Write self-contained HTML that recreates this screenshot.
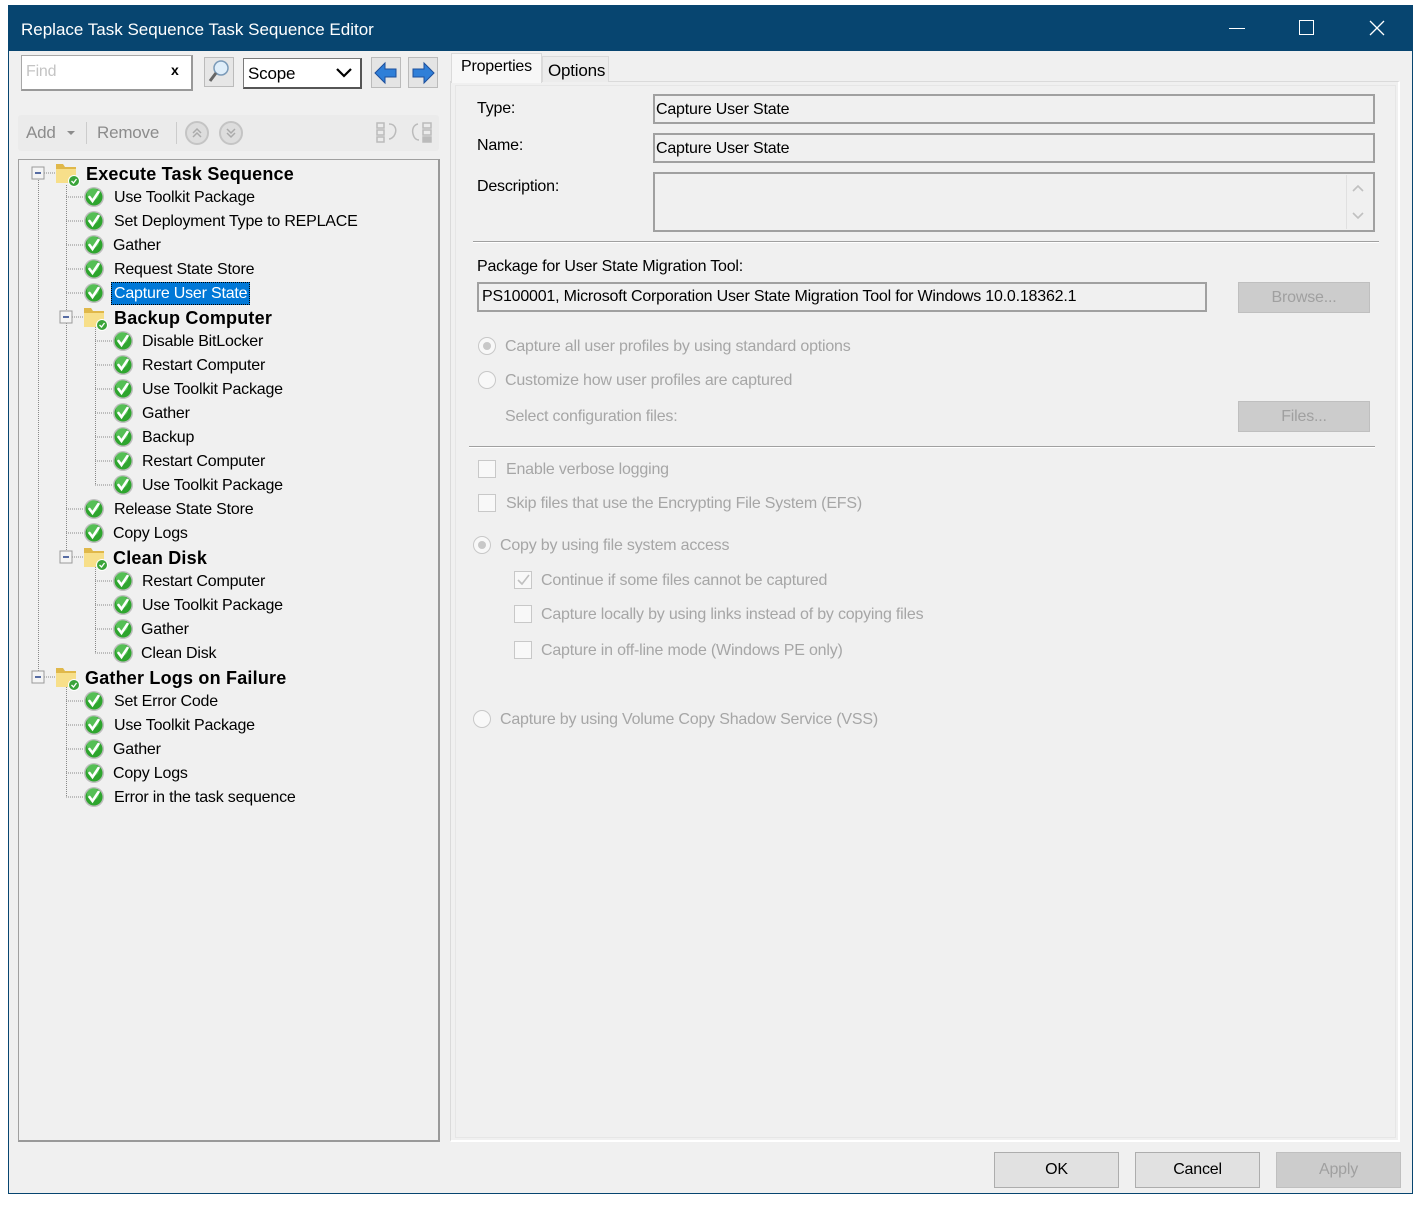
<!DOCTYPE html>
<html><head><meta charset="utf-8">
<style>
*{box-sizing:border-box;margin:0;padding:0}
body{width:1420px;height:1207px;background:#fff;position:relative;overflow:hidden;font-family:"Liberation Sans",sans-serif;font-size:16px;color:#000;letter-spacing:-0.2px}
.a{position:absolute}
#win{position:absolute;left:8px;top:5px;width:1405px;height:1189px;background:#f0f0f0;border-left:1px solid #074570;border-right:1px solid #074570;border-bottom:1px solid #074570}
#title{position:absolute;left:8px;top:5px;width:1405px;height:46px;background:#074570;color:#fff;font-size:17px;letter-spacing:0}
.t{position:absolute;white-space:nowrap;line-height:24px;height:24px}
.b{font-weight:bold;letter-spacing:0.2px}
.dim{color:#a6a6a6}
.box{position:absolute;border:2px solid #a0a0a0;background:#f0f0f0}
.btn{position:absolute;border:1px solid #adadad;background:#e1e1e1;text-align:center;font-size:16px}
.dis{background:#cccccc;border-color:#bfbfbf;color:#a0a0a0}
.rad{position:absolute;width:18px;height:18px;border-radius:50%;border:1px solid #c8c8c8;background:#f8f8f8}
.rad.on::after{content:"";position:absolute;left:4px;top:4px;width:8px;height:8px;border-radius:50%;background:#c8c8c8}
.cb{position:absolute;width:18px;height:18px;border:1px solid #c8c8c8;background:#f8f8f8}
</style></head><body>
<div id="win"></div>
<div id="title"><span class="a" style="left:13px;top:15px">Replace Task Sequence Task Sequence Editor</span>
<div class="a" style="left:1221px;top:23px;width:16px;height:1px;background:#fff"></div>
<div class="a" style="left:1291px;top:15px;width:15px;height:15px;border:1px solid #fff"></div>
<svg class="a" style="left:1361px;top:15px" width="16" height="16"><path d="M1 1L15 15M15 1L1 15" stroke="#fff" stroke-width="1.3"/></svg>
</div>

<div class="a" style="left:21px;top:55px;width:172px;height:36px;border:1px solid #a8a8a8;border-right:2px solid #999;border-bottom:2px solid #999;background:#fff"></div>
<span class="a dim" style="left:26px;top:63px;color:#c4c4c4">Find</span>
<span class="a" style="left:171px;top:62px;font-size:14px;font-weight:bold">x</span>
<div class="a" style="left:204px;top:57px;width:30px;height:30px;border:1px solid #bbb;background:#e6e6e6"></div>
<svg class="a" style="left:206px;top:58px" width="26" height="28"><circle cx="15" cy="10" r="7" fill="#dfeefa" stroke="#7a9ab8" stroke-width="1.5"/><path d="M10 15L4 23" stroke="#666" stroke-width="3"/></svg>
<div class="a" style="left:243px;top:58px;width:119px;height:31px;border:1px solid #7a7a7a;border-right:2px solid #555;border-bottom:2px solid #555;background:#fff"></div>
<span class="a" style="left:248px;top:64px;font-size:17px">Scope</span>
<svg class="a" style="left:335px;top:67px" width="18" height="12"><path d="M2 2L9 9L16 2" stroke="#000" stroke-width="2.2" fill="none"/></svg>
<div class="a" style="left:371px;top:57px;width:30px;height:31px;border:1px solid #bbb;background:#e4e4e4"></div>
<svg class="a" style="left:373px;top:60px" width="26" height="26"><path d="M2 13L12 3V9H23V17H12V23Z" fill="#2f7fd8" stroke="#1d4f9c" stroke-width="1"/></svg>
<div class="a" style="left:408px;top:57px;width:30px;height:31px;border:1px solid #bbb;background:#e4e4e4"></div>
<svg class="a" style="left:410px;top:60px" width="26" height="26"><path d="M24 13L14 3V9H3V17H14V23Z" fill="#2f7fd8" stroke="#1d4f9c" stroke-width="1"/></svg>

<div class="a" style="left:18px;top:115px;width:421px;height:36px;background:#ebebeb;border-radius:3px"></div>
<span class="a" style="left:26px;top:123px;color:#8c8c8c;font-size:17px">Add</span>
<svg class="a" style="left:66px;top:130px" width="10" height="6"><path d="M1 1H9L5 5Z" fill="#8c8c8c"/></svg>
<div class="a" style="left:86px;top:122px;width:1px;height:22px;background:#ccc"></div>
<span class="a" style="left:97px;top:123px;color:#8c8c8c;font-size:17px">Remove</span>
<div class="a" style="left:176px;top:122px;width:1px;height:22px;background:#ccc"></div>
<svg class="a" style="left:184px;top:120px" width="62" height="26" fill="none"><circle cx="13" cy="13" r="11" fill="#ddd" stroke="#c4c4c4" stroke-width="2"/><path d="M9 13L13 9L17 13M9 17L13 13L17 17" stroke="#aaa" stroke-width="1.5"/><circle cx="47" cy="13" r="11" fill="#ddd" stroke="#c4c4c4" stroke-width="2"/><path d="M43 9L47 13L51 9M43 13L47 17L51 13" stroke="#aaa" stroke-width="1.5"/></svg>
<svg class="a" style="left:375px;top:120px" width="26" height="26" fill="none" stroke="#bbb" stroke-width="1.5"><rect x="2" y="3" width="7" height="5"/><rect x="2" y="10" width="7" height="5"/><rect x="2" y="17" width="7" height="5"/><path d="M14 4C20 4 22 9 20 14C19 17 16 19 14 19"/></svg>
<svg class="a" style="left:410px;top:120px" width="26" height="26" fill="none" stroke="#bbb" stroke-width="1.5"><path d="M8 4C3 5 2 10 3 14C4 18 6 20 9 20"/><rect x="13" y="3" width="8" height="5"/><rect x="13" y="10" width="8" height="5"/><rect x="13" y="17" width="8" height="5" fill="#bbb"/></svg>

<div class="a" style="left:18px;top:159px;width:422px;height:983px;border:1px solid #a0a0a0;border-right:2px solid #999;border-bottom:2px solid #999;background:#f0f0f0"></div>
<svg class="a" style="left:0;top:0" width="450" height="820">
<defs>
<g id="ck"><circle cx="0" cy="0" r="10" fill="#bdbdbd"/><circle cx="0" cy="0" r="8.5" fill="#2ea52e"/><circle cx="-1" cy="-3" r="6" fill="#6fd06f" opacity=".6"/><path d="M-4.5 0L-1.5 4L4.5 -5" stroke="#fff" stroke-width="2.6" fill="none" stroke-linecap="round"/></g>
<g id="fd"><path d="M-11 -9H-4L-2 -6H9V10H-11Z" fill="#e0b84a"/><path d="M-11 -4H9V10H-11Z" fill="#f7df8a"/><circle cx="7" cy="8" r="5.5" fill="#3aa43a" stroke="#fff" stroke-width="1"/><path d="M4.5 8L6.5 10L9.5 6" stroke="#fff" stroke-width="1.3" fill="none"/></g>
<g id="ex"><rect x="-6" y="-6" width="12" height="12" fill="#f4f4f4" stroke="#9a9a9a"/><path d="M-3 0H3" stroke="#223e88" stroke-width="1.5"/></g>
</defs>
<g stroke="#888" stroke-dasharray="1,1" stroke-width="1">
<path d="M38.5 180V671M66.5 185V557M66.5 685V797M95.5 325V485M95.5 565V653"/>
<path d="M44 173H55M72 317H83M72 557H83M44 677H55"/>
<path d="M66 197H83M66 221H83M66 245H83M66 269H83M66 293H83M66 509H83M66 533H83M66 701H83M66 725H83M66 749H83M66 773H83M66 797H83"/>
<path d="M95 341H112M95 365H112M95 389H112M95 413H112M95 437H112M95 461H112M95 485H112M95 581H112M95 605H112M95 629H112M95 653H112"/>
</g>
<use href="#ex" x="38" y="173"/><use href="#fd" x="67" y="173"/>
<use href="#ex" x="66" y="317"/><use href="#fd" x="95" y="317"/>
<use href="#ex" x="66" y="557"/><use href="#fd" x="95" y="557"/>
<use href="#ex" x="38" y="677"/><use href="#fd" x="67" y="677"/>
<use href="#ck" x="94" y="197"/><use href="#ck" x="94" y="221"/><use href="#ck" x="94" y="245"/><use href="#ck" x="94" y="269"/><use href="#ck" x="94" y="293"/>
<use href="#ck" x="123" y="341"/><use href="#ck" x="123" y="365"/><use href="#ck" x="123" y="389"/><use href="#ck" x="123" y="413"/><use href="#ck" x="123" y="437"/><use href="#ck" x="123" y="461"/><use href="#ck" x="123" y="485"/>
<use href="#ck" x="94" y="509"/><use href="#ck" x="94" y="533"/>
<use href="#ck" x="123" y="581"/><use href="#ck" x="123" y="605"/><use href="#ck" x="123" y="629"/><use href="#ck" x="123" y="653"/>
<use href="#ck" x="94" y="701"/><use href="#ck" x="94" y="725"/><use href="#ck" x="94" y="749"/><use href="#ck" x="94" y="773"/><use href="#ck" x="94" y="797"/>
</svg>
<div class="t b" style="left:86px;top:162px;font-size:18px">Execute Task Sequence</div>
<div class="t" style="left:114px;top:186px">Use Toolkit Package</div>
<div class="t" style="left:114px;top:210px">Set Deployment Type to REPLACE</div>
<div class="t" style="left:113px;top:234px">Gather</div>
<div class="t" style="left:114px;top:258px">Request State Store</div>
<div class="t" style="left:111px;top:282px;height:23px;line-height:22px;background:#0078d7;color:#fff;padding:0 2px;border:1px dotted #000">Capture User State</div>
<div class="t b" style="left:114px;top:306px;font-size:18px">Backup Computer</div>
<div class="t" style="left:142px;top:330px">Disable BitLocker</div>
<div class="t" style="left:142px;top:354px">Restart Computer</div>
<div class="t" style="left:142px;top:378px">Use Toolkit Package</div>
<div class="t" style="left:142px;top:402px">Gather</div>
<div class="t" style="left:142px;top:426px">Backup</div>
<div class="t" style="left:142px;top:450px">Restart Computer</div>
<div class="t" style="left:142px;top:474px">Use Toolkit Package</div>
<div class="t" style="left:114px;top:498px">Release State Store</div>
<div class="t" style="left:113px;top:522px">Copy Logs</div>
<div class="t b" style="left:113px;top:546px;font-size:18px">Clean Disk</div>
<div class="t" style="left:142px;top:570px">Restart Computer</div>
<div class="t" style="left:142px;top:594px">Use Toolkit Package</div>
<div class="t" style="left:141px;top:618px">Gather</div>
<div class="t" style="left:141px;top:642px">Clean Disk</div>
<div class="t b" style="left:85px;top:666px;font-size:18px">Gather Logs on Failure</div>
<div class="t" style="left:114px;top:690px">Set Error Code</div>
<div class="t" style="left:114px;top:714px">Use Toolkit Package</div>
<div class="t" style="left:113px;top:738px">Gather</div>
<div class="t" style="left:113px;top:762px">Copy Logs</div>
<div class="t" style="left:114px;top:786px">Error in the task sequence</div>

<div class="a" style="left:450px;top:81px;width:950px;height:1061px;border:1px solid #dadada;border-right:2px solid #fff;border-bottom:2px solid #fff;background:#f0f0f0"></div>
<div class="a" style="left:455px;top:85px;width:941px;height:1053px;border:1px solid #e6e6e6"></div>
<div class="a" style="left:451px;top:53px;width:91px;height:30px;background:#f7f7f7;border:1px solid #dadada;border-bottom:none"></div>
<span class="a" style="left:461px;top:58px">Properties</span>
<div class="a" style="left:542px;top:56px;width:67px;height:26px;background:#ececec;border:1px solid #dadada;border-bottom:none"></div>
<span class="a" style="left:548px;top:61px;font-size:17px">Options</span>

<span class="a" style="left:477px;top:100px">Type:</span>
<div class="box" style="left:653px;top:94px;width:722px;height:30px"></div>
<span class="a" style="left:656px;top:101px">Capture User State</span>
<span class="a" style="left:477px;top:137px">Name:</span>
<div class="box" style="left:653px;top:133px;width:722px;height:30px"></div>
<span class="a" style="left:656px;top:140px">Capture User State</span>
<span class="a" style="left:477px;top:178px">Description:</span>
<div class="box" style="left:653px;top:172px;width:722px;height:60px"></div>
<div class="a" style="left:1346px;top:175px;width:1px;height:54px;background:#e0e0e0"></div>
<svg class="a" style="left:1351px;top:182px" width="14" height="40" fill="none" stroke="#c0c0c0" stroke-width="1.6"><path d="M2 9L7 4L12 9M2 31L7 36L12 31"/></svg>
<div class="a" style="left:473px;top:241px;width:906px;height:2px;background:#a0a0a0;border-bottom:1px solid #fff"></div>

<span class="a" style="left:477px;top:258px">Package for User State Migration Tool:</span>
<div class="box" style="left:477px;top:282px;width:730px;height:30px;border-color:#a0a0a0"></div>
<span class="a" style="left:482px;top:288px">PS100001, Microsoft Corporation User State Migration Tool for Windows 10.0.18362.1</span>
<div class="btn dis" style="left:1238px;top:282px;width:132px;height:31px;line-height:29px">Browse...</div>

<div class="rad on" style="left:478px;top:337px"></div>
<span class="a dim" style="left:505px;top:338px">Capture all user profiles by using standard options</span>
<div class="rad" style="left:478px;top:371px"></div>
<span class="a dim" style="left:505px;top:372px">Customize how user profiles are captured</span>
<span class="a dim" style="left:505px;top:408px">Select configuration files:</span>
<div class="btn dis" style="left:1238px;top:401px;width:132px;height:31px;line-height:29px">Files...</div>
<div class="a" style="left:469px;top:446px;width:906px;height:2px;background:#a0a0a0;border-bottom:1px solid #fff"></div>

<div class="cb" style="left:478px;top:460px"></div>
<span class="a dim" style="left:506px;top:461px">Enable verbose logging</span>
<div class="cb" style="left:478px;top:494px"></div>
<span class="a dim" style="left:506px;top:495px">Skip files that use the Encrypting File System (EFS)</span>
<div class="rad on" style="left:473px;top:536px"></div>
<span class="a dim" style="left:500px;top:537px">Copy by using file system access</span>
<div class="cb" style="left:514px;top:571px"></div>
<svg class="a" style="left:514px;top:571px" width="18" height="18"><path d="M4 9L8 13L15 4" stroke="#c0c0c0" stroke-width="1.6" fill="none"/></svg>
<span class="a dim" style="left:541px;top:572px">Continue if some files cannot be captured</span>
<div class="cb" style="left:514px;top:605px"></div>
<span class="a dim" style="left:541px;top:606px">Capture locally by using links instead of by copying files</span>
<div class="cb" style="left:514px;top:641px"></div>
<span class="a dim" style="left:541px;top:642px">Capture in off-line mode (Windows PE only)</span>
<div class="rad" style="left:473px;top:710px"></div>
<span class="a dim" style="left:500px;top:711px">Capture by using Volume Copy Shadow Service (VSS)</span>

<div class="btn" style="left:994px;top:1152px;width:125px;height:36px;line-height:34px">OK</div>
<div class="btn" style="left:1135px;top:1152px;width:125px;height:36px;line-height:34px">Cancel</div>
<div class="btn dis" style="left:1276px;top:1152px;width:125px;height:36px;line-height:34px">Apply</div>
</body></html>
